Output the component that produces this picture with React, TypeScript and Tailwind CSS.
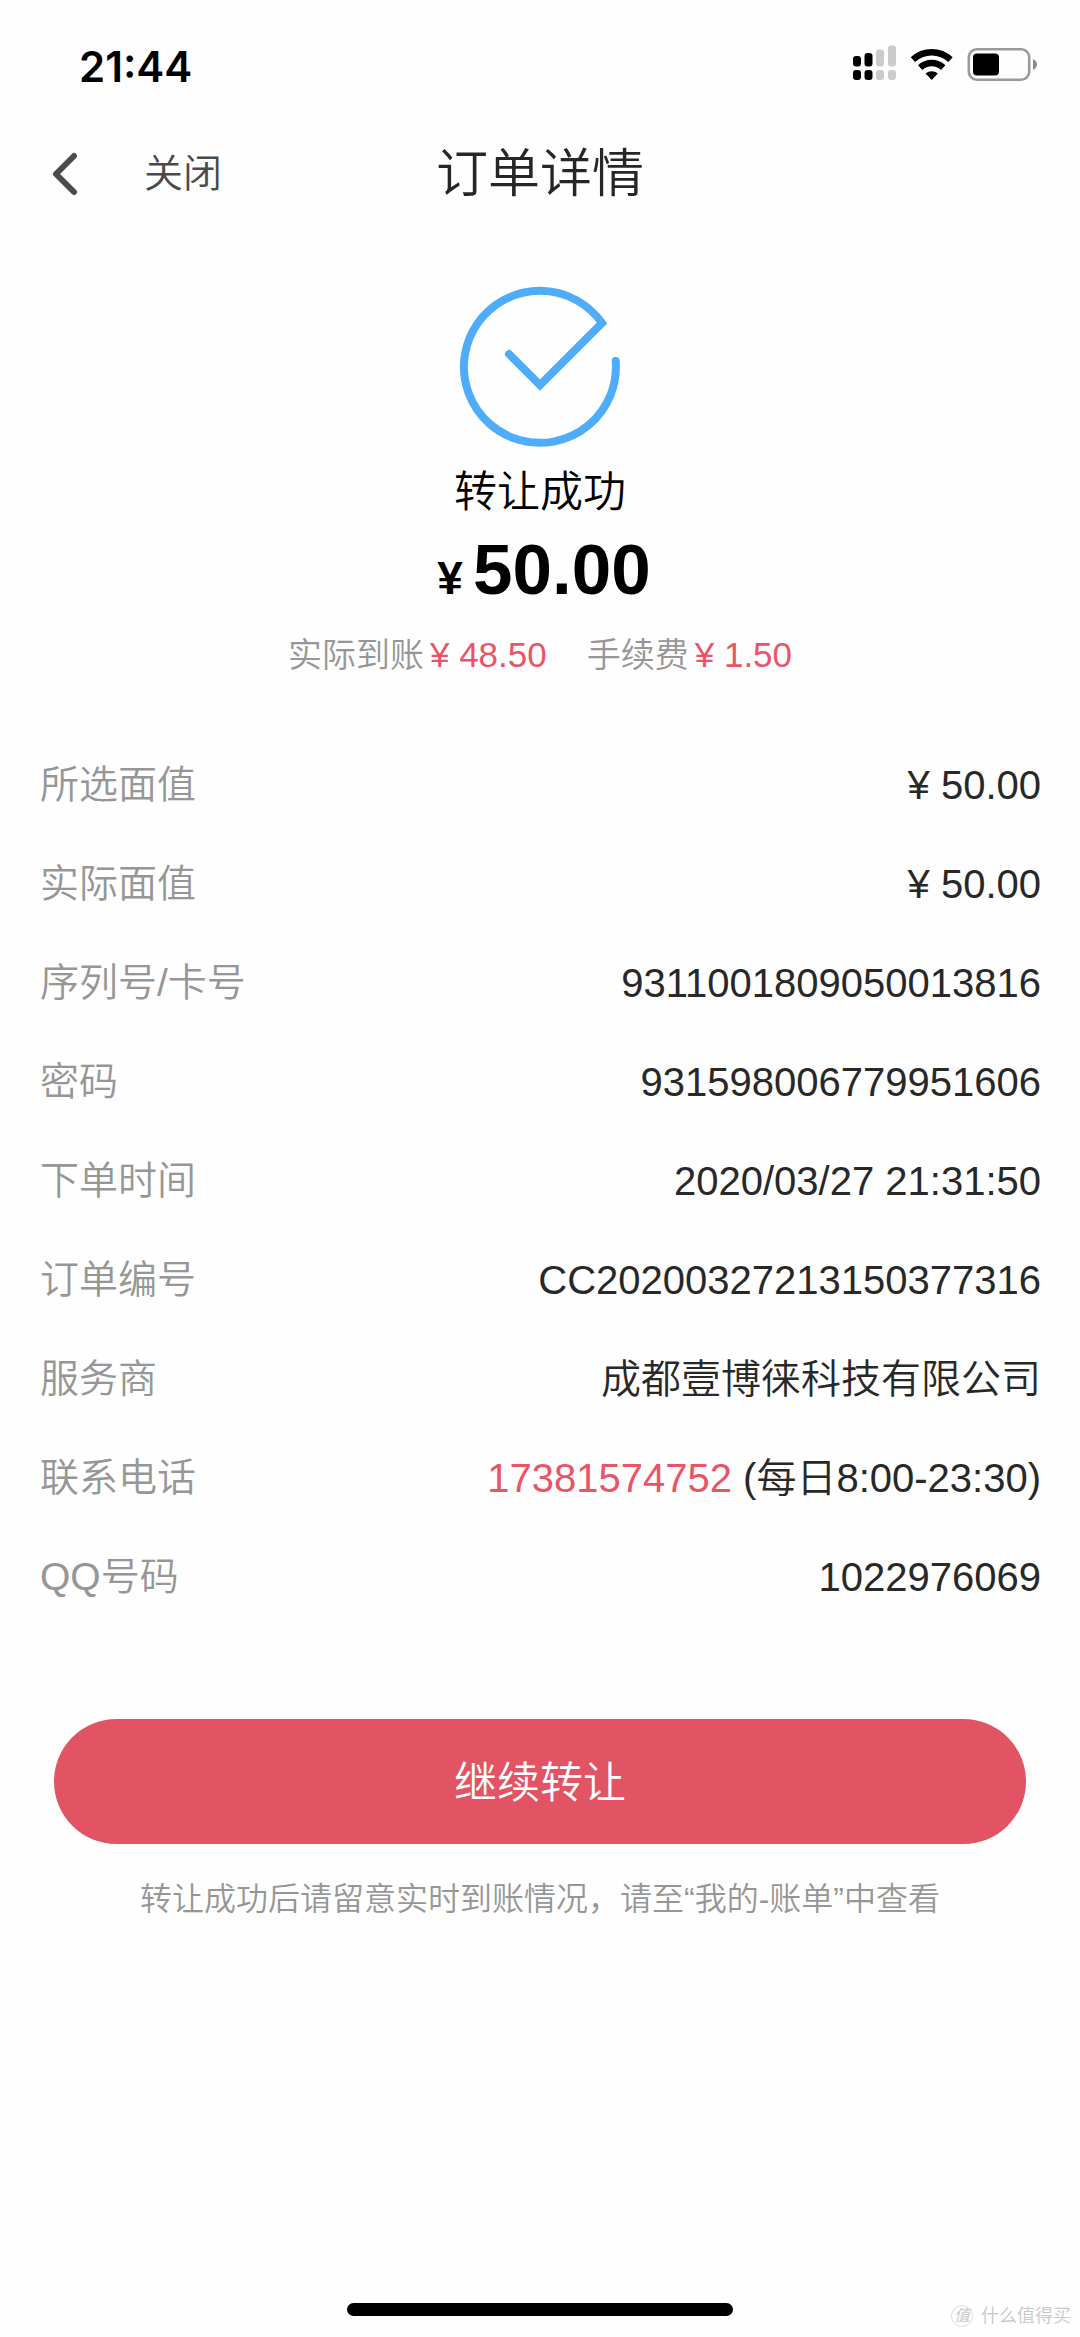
// ============================================================
// OrderDetail — transfer result page with order fields
// ============================================================
import type { ReactNode } from 'react';

interface DetailRow {
  label: string;
  value: ReactNode;
}

const rows: DetailRow[] = [
  { label: '所选面值', value: '¥ 50.00' },
  { label: '实际面值', value: '¥ 50.00' },
  { label: '序列号/卡号', value: '9311001809050013816' },
  { label: '密码', value: '931598006779951606' },
  { label: '下单时间', value: '2020/03/27 21:31:50' },
  { label: '订单编号', value: 'CC20200327213150377316' },
  { label: '服务商', value: '成都壹博徕科技有限公司' },
  {
    label: '联系电话',
    value: (
      <>
        <a href="tel:17381574752" className="text-[#e95567]">17381574752</a> (每日8:00-23:30)
      </>
    ),
  },
  { label: 'QQ号码', value: '1022976069' },
];

function StatusIcons() {
  return (
    <svg width="184" height="44" viewBox="852 44 184 44" aria-hidden="true">
      {/* Dual SIM signal */}
      <g fill="#000">
        <rect x="852" y="56" width="8" height="10.5" rx="3" />
        <rect x="863.5" y="53" width="8" height="13.5" rx="3" />
        <rect x="852" y="70" width="8" height="10" rx="3" />
        <rect x="863.5" y="70" width="8" height="10" rx="3" />
      </g>
      <g fill="#cbcbcb">
        <rect x="875" y="49.5" width="8" height="17" rx="3" />
        <rect x="887" y="45.5" width="8" height="21" rx="3" />
        <rect x="875" y="70" width="8" height="10" rx="3" />
        <rect x="887" y="70" width="8" height="10" rx="3" />
      </g>
      {/* Wi-Fi */}
      <g fill="none" stroke="#000" strokeWidth="6.4">
        <path d="M911.9 59.6A27.6 27.6 0 0 1 949.5 59.6" />
        <path d="M919.2 67.6A16.6 16.6 0 0 1 942.2 67.6" />
      </g>
      <path d="M930.7 80L924.6 73.6A9 9 0 0 1 936.8 73.6Z" fill="#000" />
      {/* Battery */}
      <rect x="967.8" y="49.3" width="60.4" height="30.4" rx="8" fill="none" stroke="#9a9a9a" strokeWidth="2.6" />
      <rect x="972" y="53.5" width="26" height="22" rx="4" fill="#000" />
      <path d="M1032 59V70C1034.400 69 1036 67 1036 64.500C1036 62 1034.400 60 1032 59Z" fill="#8c8c8c" />
    </svg>
  );
}

function StatusBar() {
  return (
    <div className="flex h-[132px] items-center justify-between pl-[79px] pr-[43px]">
      <span className="font-[Inter] text-[42px] font-semibold text-black">21:44</span>
      <StatusIcons />
    </div>
  );
}

function NavBar() {
  return (
    <header className="grid h-[84px] grid-cols-[1fr_auto_1fr] items-center">
      <div className="flex items-center gap-16 pl-[52px]">
        <button type="button" aria-label="返回">
          <svg width="28" height="48" viewBox="0 0 28 48" fill="none" stroke="#4a4a4a" strokeWidth="6" strokeLinecap="round">
            <path d="M22 6L4 24L22 42" strokeLinejoin="round" />
          </svg>
        </button>
        <button type="button" className="text-[39px] leading-[60px] text-[#4a4a4a]">关闭</button>
      </div>
      <h1 className="text-[52px] font-[350] leading-[80px] text-[#262626]">订单详情</h1>
    </header>
  );
}

function Result() {
  return (
    <section className="flex flex-col items-center pt-[70px]">
      <svg width="162" height="162" viewBox="-1 -1 162 162" fill="none" stroke="#4facf9" strokeWidth="8" strokeLinecap="round" aria-hidden="true">
        <path d="M49 67L80 98L142 36A76 76 0 1 0 155.700 74" strokeLinejoin="miter" />
      </svg>
      <p className="mt-[14px] text-[43px] leading-[60px] text-black">转让成功</p>
      <p className="mt-2 flex items-baseline gap-[10px] pl-2 font-bold leading-[80px] text-black">
        <span className="text-[46px]">¥</span>
        <span className="text-[71px]">50.00</span>
      </p>
      <div className="mt-3 flex gap-10 text-[35px] leading-[50px]">
        <p className="flex items-baseline gap-[6px]">
          <span className="text-[34px] text-[#969696]">实际到账</span>
          <span className="text-[#e95567]">¥ 48.50</span>
        </p>
        <p className="flex items-baseline gap-[6px]">
          <span className="text-[34px] text-[#969696]">手续费</span>
          <span className="text-[#e95567]">¥ 1.50</span>
        </p>
      </div>
    </section>
  );
}

export default function App() {
  return (
    <div className="relative flex min-h-screen flex-col bg-[#fefefe] font-['Liberation_Sans','Noto_Sans_CJK_SC',sans-serif] font-[350]">
      <StatusBar />
      <NavBar />

      <main>
        <Result />

        <dl className="mt-[55px] pl-10 pr-[39px] text-[40px] leading-[60px]">
          {rows.map((row) => (
            <div key={row.label} className="flex h-[99px] items-center justify-between">
              <dt className="text-[39px] text-[#969696]">{row.label}</dt>
              <dd className="text-[#282828]">{row.value}</dd>
            </div>
          ))}
        </dl>

        <div className="px-[54px] pt-[93px]">
          <button type="button" className="h-[125px] w-full rounded-full bg-[#e25463] pt-1 text-[43px] text-white">
            继续转让
          </button>
        </div>
        <p className="mt-[31px] text-center text-[32px] leading-[48px] text-[#969696]">
          转让成功后请留意实时到账情况，请至“我的-账单”中查看
        </p>
      </main>

      {/* Home indicator */}
      <div className="mx-auto mb-[21px] mt-auto h-[13px] w-[386px] rounded-full bg-black" />

      {/* Watermark */}
      <div className="absolute bottom-2 right-[9px] flex items-center gap-2 text-[18px] leading-[26px] text-[#c8c8c8]">
        <span className="flex size-[22px] items-center justify-center rounded-full border border-[#dedede] text-[16px] italic leading-none">值</span>
        <span>什么值得买</span>
      </div>
    </div>
  );
}
